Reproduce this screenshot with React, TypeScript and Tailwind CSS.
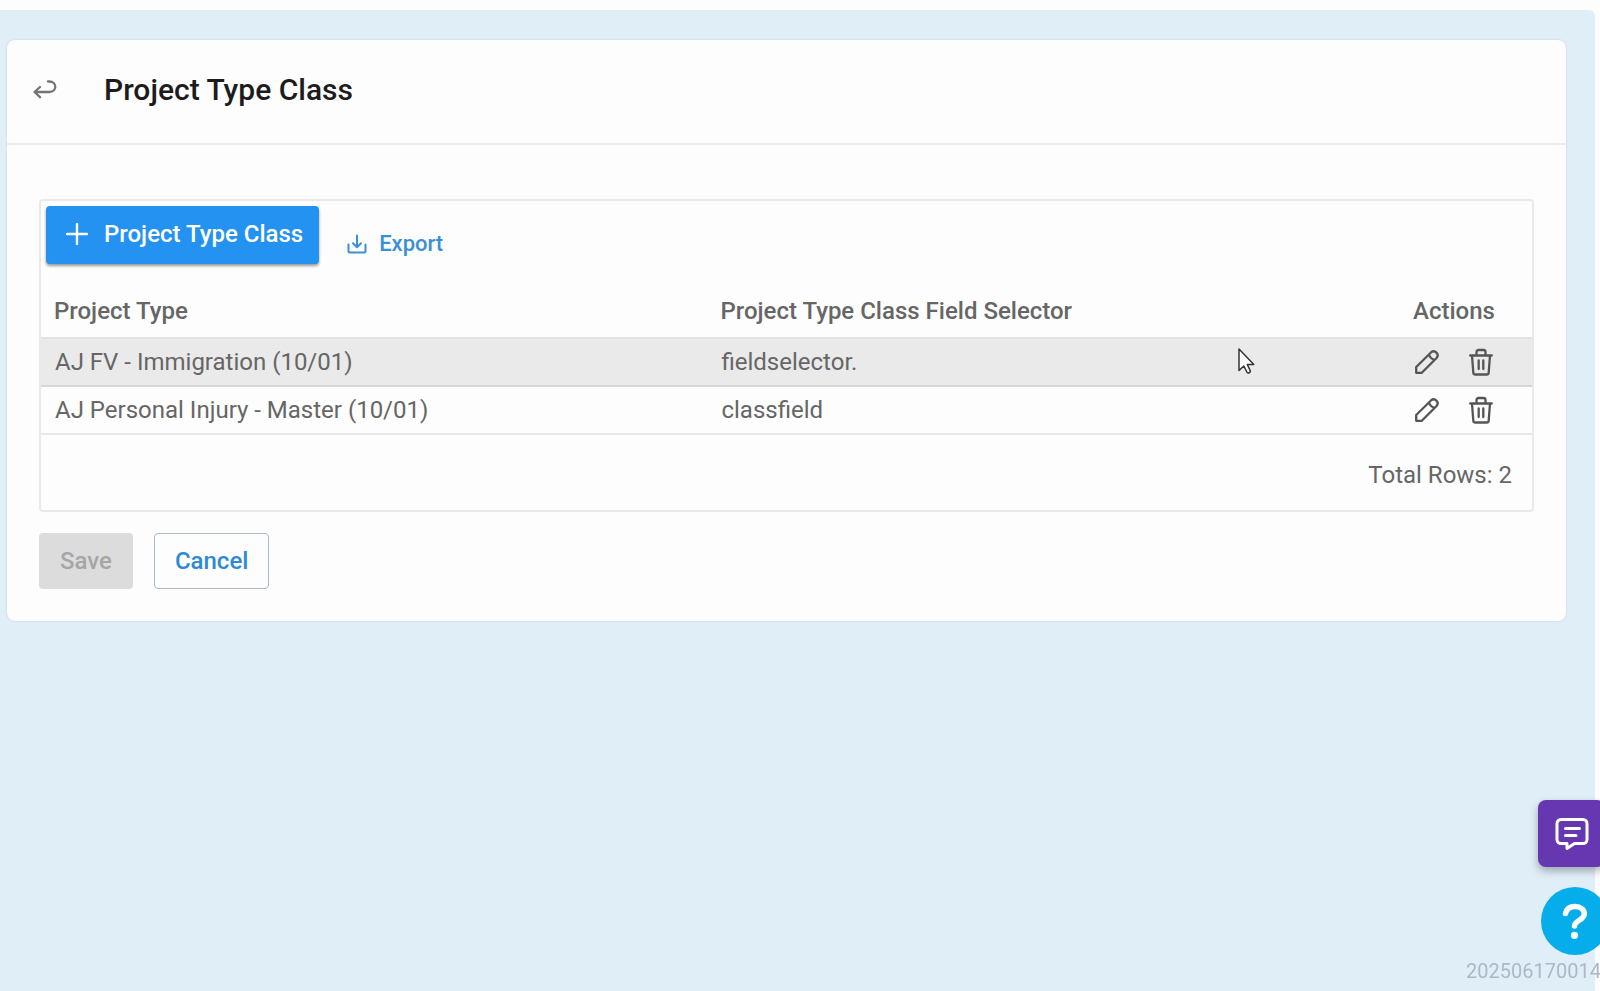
const rows = [
  { type: 'AJ FV - Immigration (10/01)', selector: 'fieldselector.', active: true },
  { type: 'AJ Personal Injury - Master (10/01)', selector: 'classfield', active: false },
];

function BackIcon() {
  return (
    <svg width="24" height="20" viewBox="0 0 24 20" fill="none" stroke="currentColor" strokeWidth="2.3" strokeLinecap="round" strokeLinejoin="round" aria-hidden="true">
      <path d="M7 7 1.500 12l5.500 5.200M2 12h14.500c3.400 0 5.800-2.300 5.800-5.200s-2.400-5.300-5.800-5.300H15" />
    </svg>
  );
}

function PlusIcon() {
  return (
    <svg width="22" height="22" viewBox="0 0 22 22" fill="none" stroke="currentColor" strokeWidth="2.4" strokeLinecap="round" aria-hidden="true">
      <path d="M11 1v20M1 11h20" />
    </svg>
  );
}

function DownloadIcon() {
  return (
    <svg width="20" height="20" viewBox="0 0 20 20" fill="none" stroke="currentColor" strokeWidth="2" strokeLinecap="round" strokeLinejoin="round" aria-hidden="true">
      <path d="M10 1.500v11.500M6 9.300l4 3.900 4-3.900M1.500 10.500v6.500a1.500 1.500 0 0 0 1.500 1.500h14a1.500 1.500 0 0 0 1.500-1.500v-6.500" />
    </svg>
  );
}

function PencilIcon() {
  return (
    <svg width="24" height="24" viewBox="0 0 24 24" fill="none" stroke="currentColor" strokeWidth="2.3" strokeLinejoin="round" aria-hidden="true">
      <path d="M1.200 22.800v-5.800L16.200 2.200a4 4 0 0 1 5.600 5.600L6.800 22.800zM14 4.500c1 3.200 2.500 4.700 5.500 5.300" />
    </svg>
  );
}

function TrashIcon() {
  return (
    <svg width="24" height="28" viewBox="0 0 24 28" fill="none" stroke="currentColor" strokeWidth="2.3" strokeLinecap="round" strokeLinejoin="round" aria-hidden="true">
      <path d="M1.200 7.500h21.600M7.500 7.500V4A2 2 0 0 1 9.500 2h5a2 2 0 0 1 2 2v3.500M3 7.500l1.300 17a2 2 0 0 0 2 2h11.400a2 2 0 0 0 2-2l1.300-17M9.700 12.500v8.500M14.300 12.500v8.500" />
    </svg>
  );
}

function ChatIcon() {
  return (
    <svg width="34" height="34" viewBox="0 0 34 34" fill="none" stroke="currentColor" strokeWidth="3" strokeLinecap="round" strokeLinejoin="round" aria-hidden="true">
      <path d="M6 2.500h22a4 4 0 0 1 4 4v16a4 4 0 0 1-4 4h-8.500L12 31.500v-5H6a4 4 0 0 1-4-4v-16a4 4 0 0 1 4-4zM10.500 11.500h14M10.500 18.500h10.500" />
    </svg>
  );
}

function HelpIcon() {
  return (
    <svg width="26" height="36" viewBox="0 0 26 36" fill="none" stroke="currentColor" strokeWidth="5.500" strokeLinecap="round" strokeLinejoin="round" aria-hidden="true">
      <path d="M3.500 10.500C4.500 6 8 3.500 13 3.500c5.500 0 9.300 3 9.300 7.500 0 6-9.800 6.500-9.800 12" />
      <circle cx="12.500" cy="32.300" r="3.600" fill="currentColor" stroke="none" />
    </svg>
  );
}

export default function App() {
  return (
    <div className="flex min-h-screen flex-col overflow-hidden bg-[#fdfdfd] pt-[10px] pr-[5px] font-[Roboto,sans-serif] text-[24px] leading-[28px] text-[#666]">
      <main className="grow rounded-tr-md bg-[#e0eef8] pt-[30px] pr-[29px] pl-[7px]">
        <section className="rounded-lg bg-[#fdfdfd] shadow-[0_0_2px_rgba(60,110,150,0.25)]">
          <header className="flex h-[105px] items-center gap-[47px] border-b-2 border-[#e8ebed] pb-[3px] pl-[26px]">
            <button type="button" aria-label="Back" className="text-[#757575]">
              <BackIcon />
            </button>
            <h1 className="text-[30px] leading-9 font-medium text-[#1c1c1c]">Project Type Class</h1>
          </header>

          <div className="px-8 pt-[54px] pb-8">
            <div className="rounded-[4px] border-2 border-[#e8e9eb]">
              <div className="flex h-[83px] items-start gap-7 pt-[5px] pl-[5px]">
                <button type="button" className="flex h-[58px] items-center gap-4 rounded-[4px] bg-[#2392f0] pr-4 pb-[2px] pl-5 font-medium text-white shadow-[0_2px_3px_rgba(0,0,0,0.4)]">
                  <PlusIcon />
                  Project Type Class
                </button>
                <button type="button" className="mt-[9px] flex h-[58px] items-center gap-3 text-[22px] font-medium text-[#3b8fd6]">
                  <DownloadIcon />
                  Export
                </button>
              </div>

              <table className="w-full table-fixed border-collapse text-left">
                <colgroup>
                  <col className="w-[44.7%]" />
                  <col />
                  <col className="w-[133px]" />
                </colgroup>
                <thead>
                  <tr className="h-[54px] border-b-2 border-[#e2e2e2]">
                    <th className="px-[13px] font-medium">Project Type</th>
                    <th className="px-[13px] font-medium">Project Type Class Field Selector</th>
                    <th className="px-[14px] font-medium">Actions</th>
                  </tr>
                </thead>
                <tbody>
                  {rows.map((row) => (
                    <tr key={row.type} className={row.active ? 'h-12 border-b-2 border-[#d6d6d6] bg-[#eaeaea]' : 'h-12 border-b-2 border-[#e8e8e8]'}>
                      <td className="px-[14px]">{row.type}</td>
                      <td className="px-[14px]">{row.selector}</td>
                      <td className="px-4">
                        <div className="flex items-center gap-[30px] text-[#555]">
                          <button type="button" aria-label={'Edit ' + row.type}>
                            <PencilIcon />
                          </button>
                          <button type="button" aria-label={'Delete ' + row.type}>
                            <TrashIcon />
                          </button>
                        </div>
                      </td>
                    </tr>
                  ))}
                </tbody>
              </table>

              <p className="flex h-[75px] items-center justify-end pt-1 pr-5">Total Rows: 2</p>
            </div>

            <div className="mt-[21px] flex gap-[21px]">
              <button type="button" disabled className="h-14 rounded-[4px] bg-[#dcdcdc] px-[21px] font-medium text-[#a6a6a6]">
                Save
              </button>
              <button type="button" className="h-14 rounded-[4px] border border-[#a9bac9] px-5 font-medium text-[#3089d8]">
                Cancel
              </button>
            </div>
          </div>
        </section>
      </main>

      <div className="fixed right-[-9px] bottom-2 flex flex-col items-end">
        <button type="button" aria-label="Chat" className="mr-1 flex size-[67px] items-center justify-center rounded-lg bg-[#6537b1] text-white shadow-[0_4px_8px_rgba(0,0,0,0.3)]">
          <ChatIcon />
        </button>
        <button type="button" aria-label="Help" className="mt-5 flex size-[68px] items-center justify-center rounded-full bg-[#05aeea] text-white">
          <HelpIcon />
        </button>
        <span className="mt-1 mr-2 text-[20px] leading-6 text-[#adb8c6]">202506170014</span>
      </div>

      <svg className="pointer-events-none absolute top-[347px] left-[1237px]" width="20" height="28" viewBox="0 0 20 28" aria-hidden="true">
        <path d="M2 2v21.500l4.800-4.500 3.300 6.500c1.200 1.200 3.600 0 3.200-1.600l-3-6.400h6.500z" fill="#fff" stroke="#333" strokeWidth="1.500" strokeLinejoin="round" />
      </svg>
    </div>
  );
}
